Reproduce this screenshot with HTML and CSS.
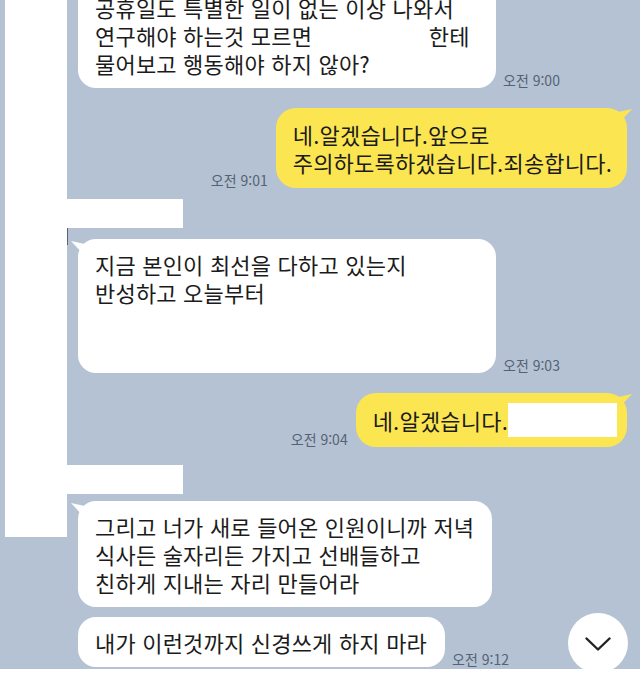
FILE: index.html
```html
<!DOCTYPE html>
<html lang="ko">
<head>
    <meta charset="UTF-8">
    <meta name="viewport" content="width=device-width, initial-scale=1.0">
    <title>채팅</title>
    <link rel="stylesheet" href="styles.css">
</head>
<body>
    <div id="chat">
        <div class="profile-cover"></div>
        <div class="profile-edge"></div>

        <div class="messages">
            <div class="row row-in">
                <div class="bubble bubble-in bubble-wide">
                    공휴일도 특별한 일이 없는 이상 나와서<br>
                    연구해야 하는것 모르면 <span class="blank"></span> 한테<br>
                    물어보고 행동해야 하지 않아?
                </div>
                <span class="time">오전 9:00</span>
            </div>

            <div class="row row-out">
                <span class="time">오전 9:01</span>
                <div class="bubble bubble-out tail-out">
                    네.알겠습니다.앞으로<br>
                    주의하도록하겠습니다.죄송합니다.
                </div>
            </div>

            <div class="sender sender-first"></div>

            <div class="row row-in row-after-sender">
                <div class="bubble bubble-in bubble-wide tail-in">
                    지금 본인이 최선을 다하고 있는지<br>
                    반성하고 오늘부터<br>
                    &nbsp;<br>
                    &nbsp;
                </div>
                <span class="time">오전 9:03</span>
            </div>

            <div class="row row-out">
                <span class="time">오전 9:04</span>
                <div class="bubble bubble-out bubble-short tail-out">
                    네.알겠습니다.<span class="redact"></span>
                </div>
            </div>

            <div class="sender sender-second"></div>

            <div class="row row-in row-after-sender-tight">
                <div class="bubble bubble-in tail-in">
                    그리고 너가 새로 들어온 인원이니까 저녁<br>
                    식사든 술자리든 가지고 선배들하고<br>
                    친하게 지내는 자리 만들어라
                </div>
            </div>

            <div class="row row-in row-cont">
                <div class="bubble bubble-in">
                    내가 이런것까지 신경쓰게 하지 마라
                </div>
                <span class="time">오전 9:12</span>
            </div>
        </div>

        <button class="scroll-down" type="button" aria-label="아래로">
            <svg width="26" height="14" viewBox="0 0 26 14">
                <path d="M1.5 1.5 L13 12.5 L24.5 1.5" fill="none" stroke="#222" stroke-width="2.4" stroke-linecap="round" stroke-linejoin="round"/>
            </svg>
        </button>
    </div>
    <div id="bottom-bar"></div>
</body>
</html>
```

FILE: styles.css
```css
body {
    margin: 0;
    font-family: "Noto Sans CJK KR", "Noto Sans", sans-serif;
    background-color: #fff;
}
#chat {
    position: relative;
    height: 669px;
    overflow: hidden;
    background-color: #b4c2d3;
}
.profile-cover {
    position: absolute;
    left: 5px;
    top: 0;
    width: 62px;
    height: 537px;
    background-color: #fff;
}
.profile-edge {
    position: absolute;
    left: 67px;
    top: 228px;
    width: 1px;
    height: 17px;
    background-color: #5d636b;
}
.messages {
    display: flex;
    flex-direction: column;
    padding: 0 13px 0 78px;
    margin-top: -18px;
}
.row {
    display: flex;
    align-items: flex-end;
    gap: 7px;
    margin-top: 20px;
}
.row:first-child {
    margin-top: 0;
}
.row-out {
    justify-content: flex-end;
    gap: 8px;
}
.row-cont {
    margin-top: 10px;
}
.row-after-sender {
    margin-top: 11px;
}
.row-after-sender-tight {
    margin-top: 7px;
}
.bubble {
    position: relative;
    font-size: 22px;
    line-height: 28px;
    letter-spacing: 0.2px;
    color: #1b1b1b;
    padding: 11px 18px 11px 17px;
    border-radius: 18px;
    white-space: nowrap;
}
.bubble-in {
    background-color: #fff;
}
.bubble-wide {
    width: 383px;
}
.bubble-out {
    background-color: #fbe652;
    padding: 12px 15px 12px 17px;
    border-radius: 20px;
}
.bubble-short {
    padding: 13px 10px 13px 17px;
}
.tail-in::before {
    content: "";
    position: absolute;
    left: -7px;
    top: 2px;
    width: 16px;
    height: 12px;
    background-color: #fff;
    clip-path: polygon(0 0, 100% 30%, 70% 100%);
}
.tail-out::after {
    content: "";
    position: absolute;
    right: -5px;
    top: 1px;
    width: 16px;
    height: 12px;
    background-color: #fbe652;
    clip-path: polygon(100% 0, 0 30%, 30% 100%);
}
.blank {
    display: inline-block;
    width: 104px;
}
.redact {
    display: inline-block;
    width: 109px;
    height: 34px;
    margin: -3px 0;
    vertical-align: top;
    background-color: #fff;
}
.time {
    font-size: 14px;
    line-height: 18px;
    color: #566274;
    white-space: nowrap;
    margin-bottom: -1px;
}
.sender {
    width: 116px;
    height: 29px;
    margin-left: -11px;
    background-color: #fff;
}
.sender-first {
    margin-top: 11px;
}
.sender-second {
    margin-top: 18px;
}
.scroll-down {
    position: absolute;
    left: 568px;
    top: 613px;
    width: 60px;
    height: 60px;
    border: none;
    border-radius: 50%;
    background-color: #fff;
    display: flex;
    align-items: center;
    justify-content: center;
    padding: 0;
    padding-top: 2px;
}
#bottom-bar {
    height: 27px;
    background-color: #fff;
}
```
